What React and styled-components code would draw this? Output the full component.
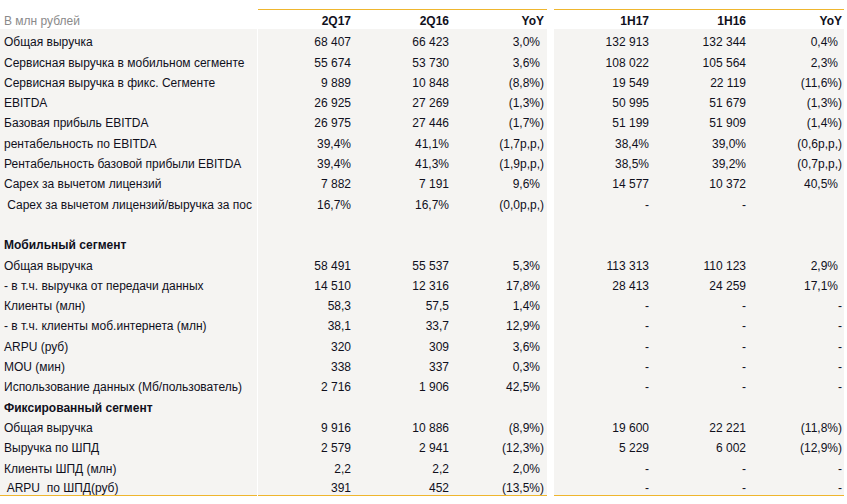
import React from 'react';
import styled, { createGlobalStyle } from 'styled-components';

const GlobalStyle = createGlobalStyle`
  body {
    margin: 0;
    background: #ffffff;
    font-family: "Liberation Sans", Arial, sans-serif;
    font-size: 12px;
    color: #10101c;
  }
`;

const GOLD = '#efb62e';
const SHADE = '#f5f4f2';

const Table = styled.div`
  width: 847px;
  padding-top: 9px;
`;

const Row = styled.div`
  display: flex;
  height: ${(p) => (p.$head ? '20px' : '20.3px')};
  line-height: 14px;
`;

const Label = styled.div`
  width: 257px;
  box-sizing: border-box;
  padding-left: 4px;
  padding-bottom: ${(p) => (p.$head ? '1px' : '0')};
  display: flex;
  align-items: flex-end;
  white-space: pre;
  overflow: hidden;
  background: ${(p) => (p.$head ? '#ffffff' : SHADE)};
  color: ${(p) => (p.$head ? '#8a8a8a' : 'inherit')};
  font-weight: ${(p) => (p.$bold ? 700 : 400)};
  border-bottom: ${(p) => (p.$last ? `1px solid ${GOLD}` : 'none')};
`;

const Group = styled.div`
  display: grid;
  grid-template-columns: ${(p) => p.$cols};
  margin-left: ${(p) => p.$gap}px;
  background: ${(p) => (p.$head ? '#ffffff' : SHADE)};
  border-top: ${(p) => (p.$head ? `1px solid ${GOLD}` : 'none')};
  border-bottom: ${(p) => (p.$last ? `1px solid ${GOLD}` : 'none')};
`;

const Cell = styled.div`
  display: flex;
  align-items: flex-end;
  justify-content: flex-end;
  white-space: pre;
  padding-right: ${(p) => p.$pad}px;
  padding-bottom: ${(p) => (p.$head ? '1px' : '0')};
  font-weight: ${(p) => (p.$head ? 700 : 400)};
`;

const LEFT = '96px 98px 95px';
const RIGHT = '98px 97px 95px';

const rows = [
  ['Общая выручка', ['68 407', '66 423', '3,0%', '132 913', '132 344', '0,4%']],
  ['Сервисная выручка в мобильном сегменте', ['55 674', '53 730', '3,6%', '108 022', '105 564', '2,3%']],
  ['Сервисная выручка в фикс. Сегменте', ['9 889', '10 848', '(8,8%)', '19 549', '22 119', '(11,6%)']],
  ['EBITDA', ['26 925', '27 269', '(1,3%)', '50 995', '51 679', '(1,3%)']],
  ['Базовая прибыль EBITDA', ['26 975', '27 446', '(1,7%)', '51 199', '51 909', '(1,4%)']],
  ['рентабельность по EBITDA', ['39,4%', '41,1%', '(1,7p,p,)', '38,4%', '39,0%', '(0,6p,p,)']],
  ['Рентабельность базовой прибыли EBITDA', ['39,4%', '41,3%', '(1,9p,p,)', '38,5%', '39,2%', '(0,7p,p,)']],
  ['Capex за вычетом лицензий', ['7 882', '7 191', '9,6%', '14 577', '10 372', '40,5%']],
  [' Capex за вычетом лицензий/выручка за пос', ['16,7%', '16,7%', '(0,0p,p,)', '-', '-', '']],
  ['', ['', '', '', '', '', '']],
  ['Мобильный сегмент', ['', '', '', '', '', ''], true],
  ['Общая выручка', ['58 491', '55 537', '5,3%', '113 313', '110 123', '2,9%']],
  ['- в т.ч. выручка от передачи данных', ['14 510', '12 316', '17,8%', '28 413', '24 259', '17,1%']],
  ['Клиенты (млн)', ['58,3', '57,5', '1,4%', '-', '-', '-']],
  ['- в т.ч. клиенты моб.интернета (млн)', ['38,1', '33,7', '12,9%', '-', '-', '-']],
  ['ARPU (руб)', ['320', '309', '3,6%', '-', '-', '-']],
  ['MOU (мин)', ['338', '337', '0,3%', '-', '-', '-']],
  ['Использование данных (Мб/пользователь)', ['2 716', '1 906', '42,5%', '-', '-', '-']],
  ['Фиксированный сегмент', ['', '', '', '', '', ''], true],
  ['Общая выручка', ['9 916', '10 886', '(8,9%)', '19 600', '22 221', '(11,8%)']],
  ['Выручка по ШПД', ['2 579', '2 941', '(12,3%)', '5 229', '6 002', '(12,9%)']],
  ['Клиенты ШПД (млн)', ['2,2', '2,2', '2,0%', '-', '-', '-']],
  [' ARPU  по ШПД(руб)', ['391', '452', '(13,5%)', '-', '-', '-']],
];

// YoY columns keep room for the closing bracket on positive values
const padFor = (v, col) => {
  const yoy = col === 2 || col === 5;
  const base = col === 5 ? 2 : 3;
  if (yoy && v && v !== '-' && !v.startsWith('(')) return base + 4;
  return base;
};

const Values = ({ vals, offset, head, last, cols, gap }) => (
  <Group $cols={cols} $gap={gap} $head={head} $last={last}>
    {vals.map((v, i) => (
      <Cell key={i} $head={head} $pad={head ? (offset + i === 5 ? 2 : 3) : padFor(v, offset + i)}>
        {v}
      </Cell>
    ))}
  </Group>
);

export default function App() {
  return (
    <>
      <GlobalStyle />
      <Table>
        <Row $head>
          <Label $head>В млн рублей</Label>
          <Values head vals={['2Q17', '2Q16', 'YoY']} offset={0} cols={LEFT} gap={1} />
          <Values head vals={['1H17', '1H16', 'YoY']} offset={3} cols={RIGHT} gap={7} />
        </Row>
        {rows.map(([label, vals, bold], i) => {
          const last = i === rows.length - 1;
          return (
            <Row key={i}>
              <Label $bold={bold} $last={last}>{label}</Label>
              <Values vals={vals.slice(0, 3)} offset={0} last={last} cols={LEFT} gap={1} />
              <Values vals={vals.slice(3)} offset={3} last={last} cols={RIGHT} gap={7} />
            </Row>
          );
        })}
      </Table>
    </>
  );
}
